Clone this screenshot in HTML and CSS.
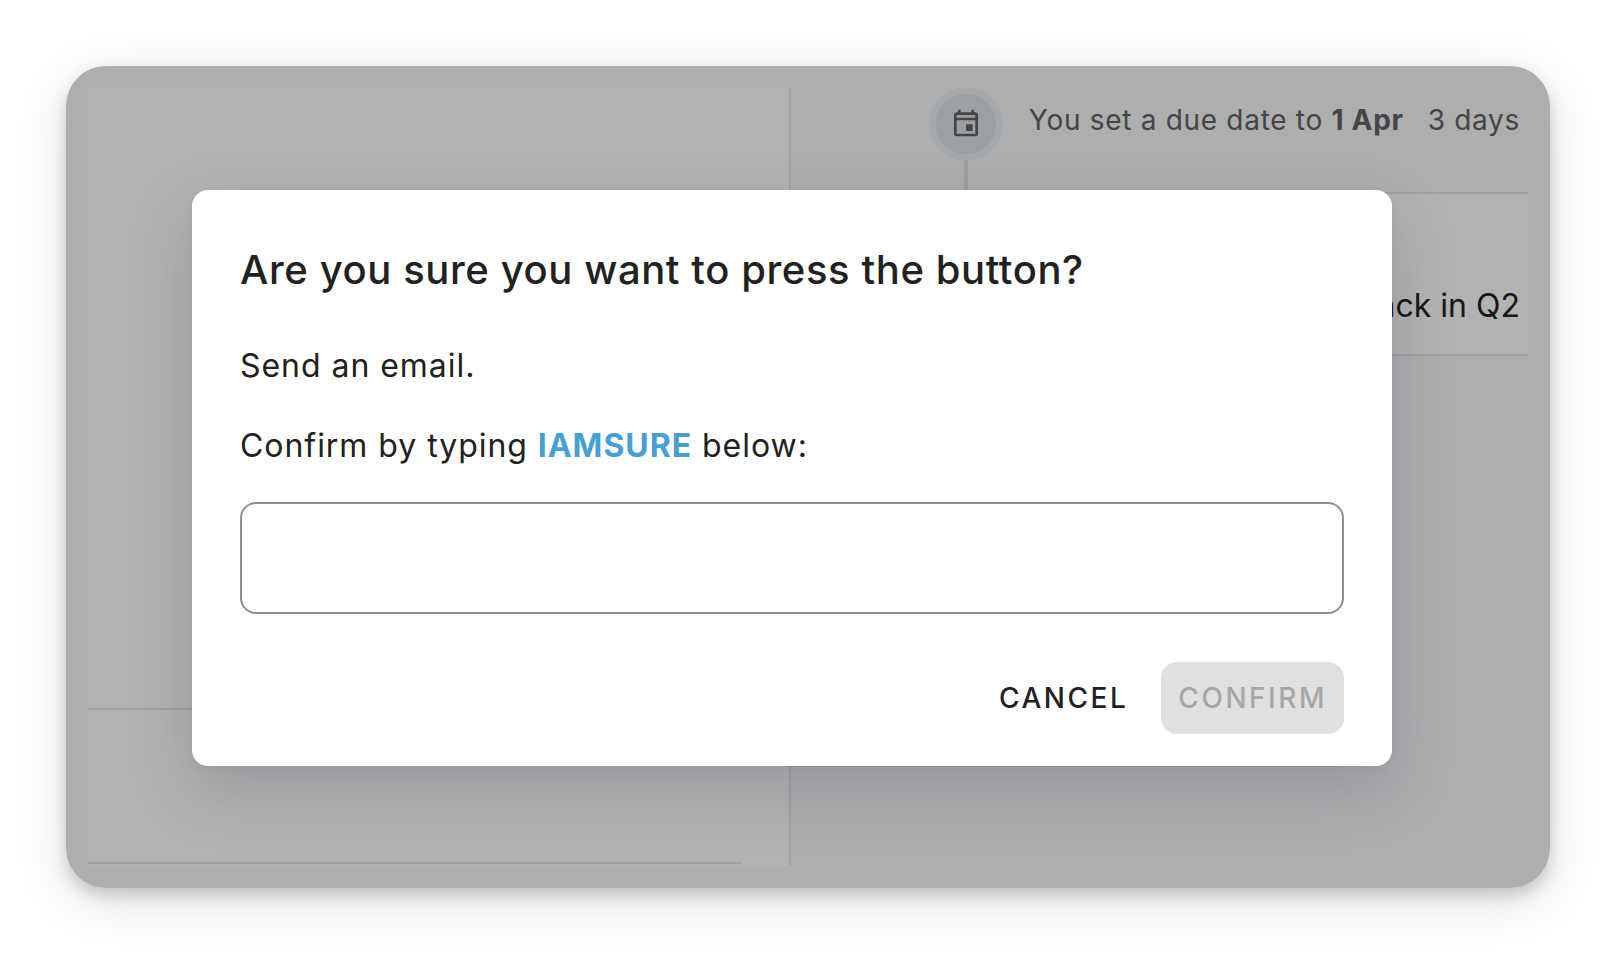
FILE: index.html
```html
<!DOCTYPE html>
<html lang="en">
<head>
    <meta charset="UTF-8">
    <meta name="viewport" content="width=device-width, initial-scale=1.0">
    <title>Confirm action</title>
    <link rel="stylesheet" href="styles.css">
</head>
<body>
    <main class="frame">
        <div class="page">
            <section class="list">
                <div class="list-top"></div>
                <div class="list-bottom"></div>
            </section>
            <section class="activity">
                <div class="event">
                    <div class="event-marker">
                        <div class="event-icon">
                            <svg viewBox="0 0 24 24" width="32" height="32" fill="currentColor" aria-hidden="true">
                                <path d="M19 4h-1V2h-2v2H8V2H6v2H5c-1.11 0-1.99.9-1.99 2L3 20c0 1.1.89 2 2 2h14c1.1 0 2-.9 2-2V6c0-1.1-.9-2-2-2zm0 16H5V10h14v10zm0-12H5V6h14v2zm-7 5h5v5h-5z"/>
                            </svg>
                        </div>
                        <div class="event-line"></div>
                    </div>
                    <p class="event-text">You set a due date to <strong>1 Apr</strong></p>
                    <span class="event-time">3 days</span>
                </div>
                <div class="comment">back in Q2</div>
            </section>
        </div>

        <div class="overlay">
            <form class="dialog" role="dialog" aria-labelledby="dialog-title">
                <h2 class="dialog-title" id="dialog-title">Are you sure you want to press the button?</h2>
                <p class="dialog-text">Send an email.</p>
                <label class="dialog-text" for="confirm-word">Confirm by typing <strong class="word">IAMSURE</strong> below:</label>
                <input class="dialog-input" id="confirm-word" type="text" autocomplete="off">
                <div class="dialog-actions">
                    <button class="btn" type="button">CANCEL</button>
                    <button class="btn btn-confirm" type="submit" disabled>CONFIRM</button>
                </div>
            </form>
        </div>
    </main>
</body>
</html>
```
FILE: styles.css
```css
:root {
    --page-color: #f7f9fb;
    --line-color: #e2e6ea;
    --text-color: #212121;
    --accent-color: #489fd0;
}

* {
    box-sizing: border-box;
}

body {
    margin: 0;
    min-height: 100vh;
    padding: 66px;
    display: flex;
    background: #fff;
    color: var(--text-color);
    font-family: Inter, "Liberation Sans", sans-serif;
}

.frame {
    position: relative;
    flex: 1;
    display: flex;
    padding: 22px;
    border-radius: 40px;
    overflow: hidden;
    background: var(--page-color);
    box-shadow: 0 8px 16px rgba(0, 0, 0, 0.17), 0 12px 56px rgba(0, 0, 0, 0.12);
}

/* page behind the dialog */
.page {
    flex: 1;
    display: grid;
    grid-template-columns: 703fr 737fr;
}

.list {
    display: flex;
    flex-direction: column;
    padding-bottom: 2px;
    border-right: 2px solid var(--line-color);
    background: #fff;
}

.list-top {
    flex: 1;
    border-bottom: 2px solid var(--line-color);
}

.list-bottom {
    height: 154px;
    margin-right: 48px;
    border-bottom: 2px solid var(--line-color);
}

.activity {
    padding-left: 138px;
    overflow: hidden;
}

.event {
    display: flex;
    height: 104px;
    padding-right: 8px;
    font-size: 28px;
    line-height: 40px;
    letter-spacing: 0.025em;
    color: #636363;
    white-space: nowrap;
}

.event-marker {
    display: flex;
    flex-direction: column;
    align-items: center;
    width: 74px;
    padding-top: 6px;
}

.event-icon {
    display: flex;
    align-items: center;
    justify-content: center;
    width: 60px;
    height: 60px;
    padding-bottom: 2px;
    border-radius: 50%;
    background: #e0e6e9;
    box-shadow: 0 0 0 7px #edf3f5;
}

.event-line {
    flex: 1;
    width: 4px;
    margin-top: 6px;
    background: #e0e4ea;
}

.event-text {
    margin: 12px 24px 0 auto;
}

.event-time {
    margin-top: 12px;
}

.comment {
    height: 164px;
    padding: 88px 8px 0 0;
    border-top: 2px solid var(--line-color);
    border-bottom: 2px solid var(--line-color);
    background: #fff;
    font-size: 32px;
    line-height: 48px;
    text-align: right;
}

/* dialog */
.overlay {
    position: absolute;
    inset: 0;
    display: flex;
    align-items: center;
    padding: 2px 158px 0 126px;
    background: rgba(0, 0, 0, 0.3);
}

.dialog {
    flex: 1;
    display: flex;
    flex-direction: column;
    padding: 48px 48px 32px;
    border-radius: 16px;
    background: #fff;
    box-shadow: 0 24px 64px rgba(50, 50, 80, 0.18), 0 2px 8px rgba(50, 50, 80, 0.05);
}

.dialog-title {
    margin: 0 0 40px;
    font-size: 40px;
    line-height: 64px;
    font-weight: 500;
    letter-spacing: 0.015em;
}

.dialog-text {
    margin: 0 0 32px;
    font-size: 32px;
    line-height: 48px;
    letter-spacing: 0.03em;
}

.word {
    color: var(--accent-color);
}

.dialog-input {
    height: 112px;
    padding: 0 32px;
    border: 2px solid #8f8f8f;
    border-radius: 16px;
    background: #fff;
    color: inherit;
    font: inherit;
    font-size: 32px;
}

.dialog-actions {
    display: flex;
    justify-content: flex-end;
    gap: 16px;
    margin-top: 48px;
}

.btn {
    height: 72px;
    padding: 0 17px;
    border: 0;
    border-radius: 16px;
    background: transparent;
    color: inherit;
    font-family: inherit;
    font-size: 28px;
    font-weight: 500;
    letter-spacing: 0.09em;
}

.btn-confirm {
    background: #e0e0e0;
    color: #a6a6a6;
}
```
